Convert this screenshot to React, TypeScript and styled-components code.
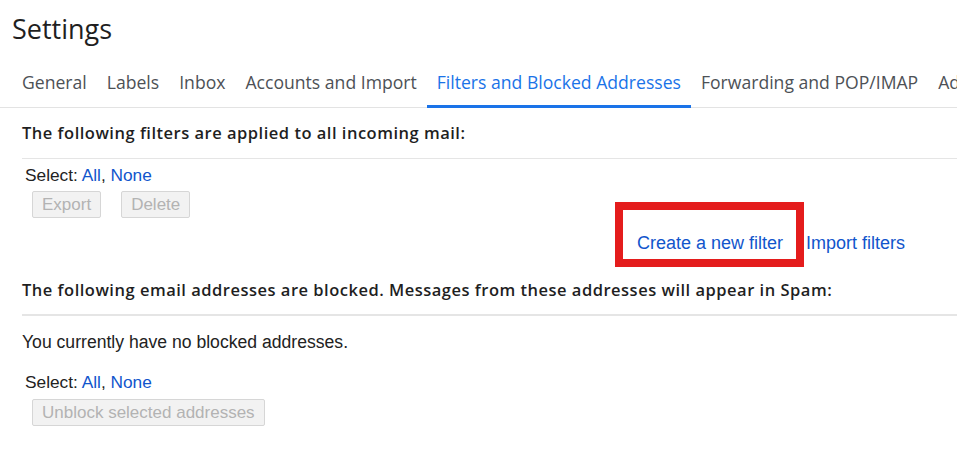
import React from 'react';
import styled, { createGlobalStyle } from 'styled-components';

const GlobalStyle = createGlobalStyle`
  html, body {
    margin: 0;
    padding: 0;
    background: #fff;
  }
  body {
    font-family: "Liberation Sans", Arial, sans-serif;
    overflow: hidden;
  }
`;

const Page = styled.div`
  width: 957px;
  height: 455px;
  overflow: hidden;
`;

const Title = styled.h1`
  margin: 0;
  padding: 14px 0 0 12px;
  font-family: "Open Sans", sans-serif;
  font-weight: 400;
  font-size: 27px;
  line-height: 30px;
  color: #1f1f1f;
`;

const TabBar = styled.nav`
  display: flex;
  padding-left: 12px;
  border-bottom: 1px solid #e3e3e3;
  white-space: nowrap;
`;

const Tab = styled.div<{ $active?: boolean }>`
  padding: 28px 10px 13px;
  font-family: "Open Sans", sans-serif;
  font-size: 17.6px;
  line-height: 20px;
  color: ${(p) => (p.$active ? '#1a73e8' : '#4d5156')};
  border-bottom: 3px solid ${(p) => (p.$active ? '#1a73e8' : 'transparent')};
  margin-bottom: -1px;
`;

const SectionHeader = styled.h2<{ $top: number; $thick?: boolean }>`
  margin: ${(p) => p.$top}px 0 0 22px;
  padding-bottom: ${(p) => (p.$thick ? '14px' : '15px')};
  font-family: "Open Sans", sans-serif;
  font-weight: 600;
  font-size: 16.5px;
  letter-spacing: 0.5px;
  line-height: 20px;
  color: #1f1f1f;
  white-space: nowrap;
  border-bottom: ${(p) => (p.$thick ? '2px' : '1px')} solid #e5e5e5;
`;

const SelectRow = styled.div<{ $top: number }>`
  margin: ${(p) => p.$top}px 0 0 25px;
  font-size: 17.3px;
  line-height: 20px;
  color: #222;
`;

const Link = styled.a`
  color: #1155cc;
  text-decoration: none;
  cursor: pointer;
`;

const ButtonRow = styled.div<{ $top: number }>`
  display: flex;
  gap: 20px;
  margin: ${(p) => p.$top}px 0 0 32px;
`;

const Button = styled.button`
  height: 27px;
  padding: 0 9px;
  font-family: "Liberation Sans", Arial, sans-serif;
  font-size: 17px;
  color: #b3b3b3;
  background: #f2f2f2;
  border: 1px solid #d6d6d6;
  border-radius: 2px;
`;

const FilterLinks = styled.div`
  display: flex;
  gap: 23px;
  margin: 14px 0 0 637px;
  font-size: 18px;
  line-height: 22px;
`;

const Highlighted = styled.span`
  position: relative;
`;

const Annotation = styled.span`
  position: absolute;
  inset: -30px -21px -13px -22px;
  border: 8px solid #e41c1c;
  pointer-events: none;
`;

const Message = styled.p`
  margin: 16px 0 0 22px;
  font-size: 17.6px;
  line-height: 20px;
  color: #222;
`;

const tabs = [
  'General',
  'Labels',
  'Inbox',
  'Accounts and Import',
  'Filters and Blocked Addresses',
  'Forwarding and POP/IMAP',
  'Add-ons',
];

const Select = ({ top }: { top: number }) => (
  <SelectRow $top={top}>
    Select: <Link>All</Link>, <Link>None</Link>
  </SelectRow>
);

const App = () => (
  <Page>
    <GlobalStyle />
    <Title>Settings</Title>
    <TabBar>
      {tabs.map((t) => (
        <Tab key={t} $active={t === 'Filters and Blocked Addresses'}>
          {t}
        </Tab>
      ))}
    </TabBar>

    <SectionHeader $top={15}>The following filters are applied to all incoming mail:</SectionHeader>
    <Select top={6} />
    <ButtonRow $top={6}>
      <Button disabled>Export</Button>
      <Button disabled>Delete</Button>
    </ButtonRow>
    <FilterLinks>
      <Highlighted>
        <Link>Create a new filter</Link>
        <Annotation />
      </Highlighted>
      <Link>Import filters</Link>
    </FilterLinks>

    <SectionHeader $top={26} $thick>
      The following email addresses are blocked. Messages from these addresses will appear in Spam:
    </SectionHeader>
    <Message>You currently have no blocked addresses.</Message>
    <Select top={20} />
    <ButtonRow $top={7}>
      <Button disabled>Unblock selected addresses</Button>
    </ButtonRow>
  </Page>
);

export default App;
